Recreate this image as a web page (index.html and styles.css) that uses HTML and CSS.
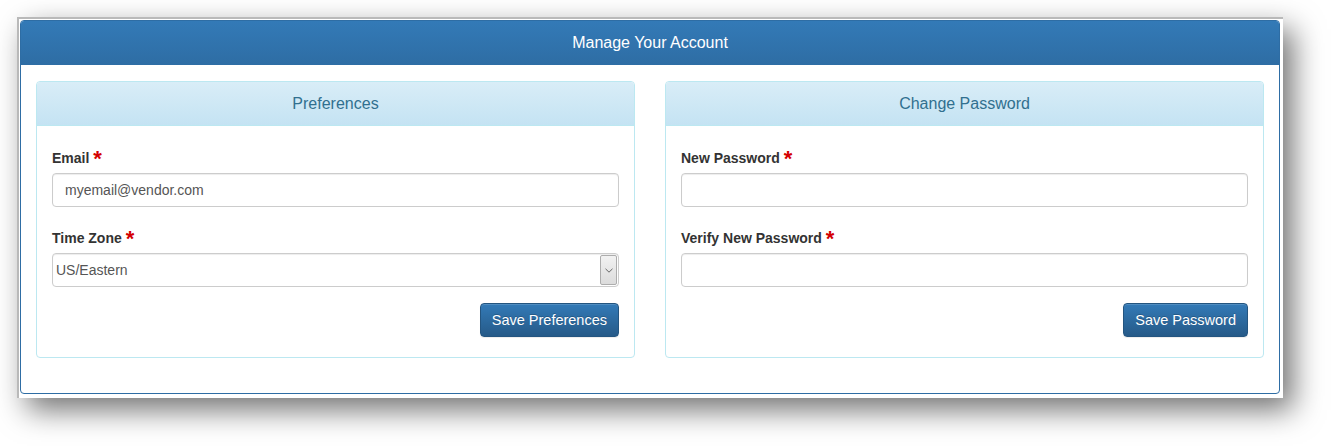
FILE: index.html
```html
<!DOCTYPE html>
<html lang="en">
<head>
<meta charset="utf-8">
<title>Manage Your Account</title>
<link rel="stylesheet" href="styles.css">
</head>
<body>
<div class="capture">
  <div class="panel-main">
    <div class="main-heading">Manage Your Account</div>
    <div class="main-body">
      <section class="sub-panel">
        <div class="sub-heading">Preferences</div>
        <div class="sub-body">
          <div class="form-group">
            <label class="field-label">Email <span class="req">*</span></label>
            <div class="text-input">myemail@vendor.com</div>
          </div>
          <div class="form-group">
            <label class="field-label">Time Zone <span class="req">*</span></label>
            <div class="select-input">
              <span class="select-value">US/Eastern</span>
              <span class="select-arrow">
                <svg width="8" height="5" viewBox="0 0 8 5"><path d="M0.5 0.8 L4 4.2 L7.5 0.8" fill="none" stroke="#666" stroke-width="1"/></svg>
              </span>
            </div>
          </div>
          <div class="actions"><button class="btn-primary" type="button">Save Preferences</button></div>
        </div>
      </section>
      <section class="sub-panel">
        <div class="sub-heading">Change Password</div>
        <div class="sub-body">
          <div class="form-group">
            <label class="field-label">New Password <span class="req">*</span></label>
            <div class="text-input"></div>
          </div>
          <div class="form-group">
            <label class="field-label">Verify New Password <span class="req">*</span></label>
            <div class="text-input"></div>
          </div>
          <div class="actions"><button class="btn-primary" type="button">Save Password</button></div>
        </div>
      </section>
    </div>
  </div>
</div>
</body>
</html>
```

FILE: styles.css
```css
* { box-sizing: border-box; }

html, body {
  min-height: 446px;
}

body {
  margin: 0;
  background: #fff;
  font-family: "Liberation Sans", Arial, sans-serif;
  color: #333;
  overflow: hidden;
}

.capture {
  margin: 17px 0 0 17px;
  width: 1266px;
  background: #fff;
  border-top: 2px solid #b9b9b9;
  border-left: 2px solid #b9b9b9;
  padding: 1px 3px 4px 1px;
  box-shadow: 10px 12px 28px rgba(0, 0, 0, 0.55);
}

.panel-main {
  border: 1px solid #2e6da4;
  border-radius: 4px;
  background: #fff;
}

.main-heading {
  height: 44px;
  line-height: 43px;
  text-align: center;
  color: #fff;
  font-size: 16px;
  background: linear-gradient(to bottom, #337ab7 0%, #2e6da4 100%);
  border-radius: 3px 3px 0 0;
}

.main-body {
  padding: 16px 15px 15px 15px;
  display: grid;
  grid-template-columns: 1fr 1fr;
  column-gap: 30px;
}

.sub-panel {
  border: 1px solid #bce8f1;
  border-radius: 4px;
  margin-bottom: 20px;
}

.sub-heading {
  height: 44px;
  line-height: 43px;
  text-align: center;
  font-size: 16px;
  color: #31708f;
  background: linear-gradient(to bottom, #d9edf7 0%, #c4e3f3 100%);
  border-bottom: 1px solid #bce8f1;
  border-radius: 3px 3px 0 0;
}

.sub-body {
  padding: 22px 15px 20px 15px;
}

.form-group + .form-group {
  margin-top: 21px;
}

.field-label {
  display: block;
  height: 20px;
  line-height: 20px;
  font-size: 14px;
  font-weight: bold;
  color: #333;
  margin-bottom: 5px;
  white-space: nowrap;
}

.req {
  color: #d40000;
  font-size: 22px;
  line-height: 0;
  vertical-align: -3px;
  font-weight: bold;
}

.text-input {
  height: 34px;
  border: 1px solid #ccc;
  border-radius: 4px;
  box-shadow: inset 0 1px 1px rgba(0, 0, 0, 0.075);
  padding: 0 12px;
  line-height: 32px;
  font-size: 14px;
  color: #555;
}

.select-input {
  height: 34px;
  border: 1px solid #ccc;
  border-radius: 4px;
  box-shadow: inset 0 1px 1px rgba(0, 0, 0, 0.075);
  display: flex;
  align-items: stretch;
  padding: 1px;
  font-size: 14px;
  color: #555;
}

.select-value {
  flex: 1;
  line-height: 30px;
  padding-left: 2px;
}

.select-arrow {
  width: 17px;
  border: 1px solid #adadad;
  border-radius: 2px;
  background: linear-gradient(to bottom, #f2f2f2 0%, #dcdcdc 100%);
  display: flex;
  align-items: center;
  justify-content: center;
}

.actions {
  margin-top: 16px;
  display: flex;
  justify-content: flex-end;
}

.btn-primary {
  height: 34px;
  padding: 0 11px;
  font-family: "Liberation Sans", Arial, sans-serif;
  font-size: 14.5px;
  color: #fff;
  background: linear-gradient(to bottom, #337ab7 0%, #265a88 100%);
  border: 1px solid #245580;
  border-radius: 4px;
  box-shadow: inset 0 1px 0 rgba(255, 255, 255, 0.15), 0 1px 1px rgba(0, 0, 0, 0.075);
  text-shadow: 0 -1px 0 rgba(0, 0, 0, 0.2);
}
```
